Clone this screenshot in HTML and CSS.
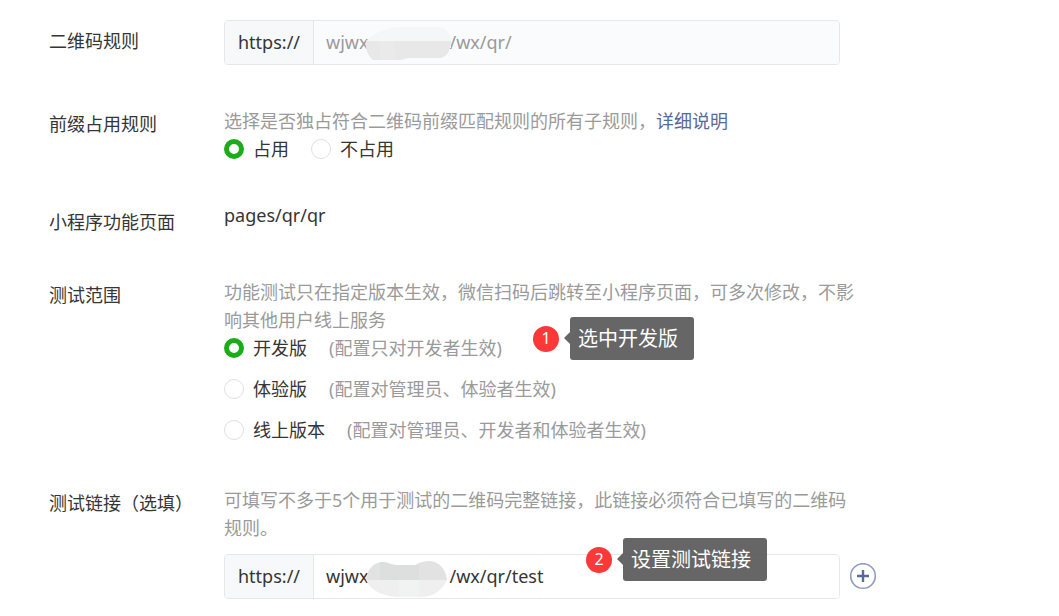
FILE: index.html
```
<!DOCTYPE html>
<html lang="zh-CN">
<head>
    <meta charset="UTF-8">
    <meta name="viewport" content="width=device-width, initial-scale=1.0">
    <title>二维码规则</title>
    <link rel="stylesheet" href="styles.css">
</head>
<body>
    <form class="form">
        <div class="row">
            <label class="row-label row-label-box" for="rule">二维码规则</label>
            <div class="row-content">
                <div class="input-line">
                    <div class="input-group disabled">
                        <span class="prefix">https://</span>
                        <input type="text" id="rule" value="wjwx&emsp;&emsp;&emsp;&emsp;&ensp;/wx/qr/" readonly>
                        <svg class="mask mask-rule" width="86" height="36" viewBox="0 0 86 36" aria-hidden="true">
                            <path fill="#f5f6f7" d="M1 15C8 7 20 3 32 1H72C80 1 86 7 86 15V22H1Z"/>
                            <path fill="#e8e8e9" d="M1 15H86C86 24 82 32 74 32H43L36 34H8C3 30 0 23 1 15Z"/>
                            <path fill="#eaeaeb" d="M15 15H30V34H15Z"/>
                        </svg>
                    </div>
                </div>
            </div>
        </div>

        <div class="row">
            <span class="row-label" id="prefixLabel">前缀占用规则</span>
            <div class="row-content">
                <p class="hint">选择是否独占符合二维码前缀匹配规则的所有子规则，<a href="#">详细说明</a></p>
                <div class="radio-inline" role="radiogroup" aria-labelledby="prefixLabel">
                    <label class="radio"><input type="radio" name="prefix" checked>占用</label>
                    <label class="radio"><input type="radio" name="prefix">不占用</label>
                </div>
            </div>
        </div>

        <div class="row">
            <span class="row-label">小程序功能页面</span>
            <div class="row-content">
                <p class="page-path">pages/qr/qr</p>
            </div>
        </div>

        <div class="row">
            <span class="row-label" id="rangeLabel">测试范围</span>
            <div class="row-content">
                <p class="hint">功能测试只在指定版本生效，微信扫码后跳转至小程序页面，可多次修改，不影响其他用户线上服务</p>
                <div class="radio-list" role="radiogroup" aria-labelledby="rangeLabel">
                    <label class="radio"><input type="radio" name="range" checked>开发版<span class="note">(配置只对开发者生效)</span></label>
                    <label class="radio"><input type="radio" name="range">体验版<span class="note">(配置对管理员、体验者生效)</span></label>
                    <label class="radio"><input type="radio" name="range">线上版本<span class="note">(配置对管理员、开发者和体验者生效)</span></label>
                    <div class="callout callout-range">
                        <span class="badge">1</span>
                        <span class="bubble">选中开发版</span>
                    </div>
                </div>
            </div>
        </div>

        <div class="row">
            <label class="row-label" for="link">测试链接（选填）</label>
            <div class="row-content">
                <p class="hint">可填写不多于5个用于测试的二维码完整链接，此链接必须符合已填写的二维码规则。</p>
                <div class="input-line input-line-link">
                    <div class="input-group">
                        <span class="prefix">https://</span>
                        <input type="text" id="link" value="wjwx&emsp;&emsp;&emsp;&emsp;&ensp;/wx/qr/test">
                        <svg class="mask mask-link" width="82" height="38" viewBox="0 0 82 38" aria-hidden="true">
                            <path fill="#e2e2e2" d="M1 20C2 9 9 2 18 2C23 2 26 5 31 5H50C55 2 60 1 65 1C75 2 81 10 82 20Z"/>
                            <path fill="#dddfdf" d="M15 2H18C23 2 26 5 31 5H54V20H15Z"/>
                            <path fill="#efefef" d="M1 20H82C78 30 68 37 56 37H32C17 36 5 30 1 20Z"/>
                            <path fill="#f1f3f3" d="M34 20H54V37H34Z"/>
                        </svg>
                    </div>
                    <button type="button" class="add" aria-label="添加链接">
                        <svg width="28" height="28" viewBox="0 0 28 28">
                            <circle cx="14" cy="13" r="12.3" fill="none" stroke="#8e9cbf" stroke-width="1.6"/>
                            <path d="M14 7V19M8 13H20" stroke="#576b95" stroke-width="2.4"/>
                        </svg>
                    </button>
                    <div class="callout callout-link">
                        <span class="badge">2</span>
                        <span class="bubble">设置测试链接</span>
                    </div>
                </div>
            </div>
        </div>
    </form>
</body>
</html>
```
FILE: styles.css
```
* {
    box-sizing: border-box;
}
body {
    margin: 0;
    padding: 20px 49px 16px;
    font-family: "Noto Sans", "Noto Sans CJK SC", sans-serif;
    font-size: 18px;
    line-height: 28px;
    color: #353535;
    background-color: #fff;
}
p {
    margin: 0;
}
.form {
    display: flex;
    flex-direction: column;
    gap: 42px;
}
.row {
    display: grid;
    grid-template-columns: 175px 1fr;
}
.row-label {
    padding-top: 3px;
    white-space: nowrap;
}
.row-label-box {
    padding-top: 7px;
}
.hint {
    max-width: 632px;
    color: #9a9a9a;
}
.hint a {
    color: #576b95;
    text-decoration: none;
}
.page-path {
    line-height: 20px;
}

/* inputs */
.input-line {
    position: relative;
    display: flex;
    align-items: center;
    gap: 9px;
}
.input-line-link {
    margin-top: 12px;
}
.input-group {
    position: relative;
    display: flex;
    flex: 1;
    max-width: 616px;
    height: 45px;
    border: 1px solid #e4e8eb;
    border-radius: 4px;
    overflow: hidden;
}
.prefix {
    width: 89px;
    padding: 0 13px;
    line-height: 43px;
    background-color: #f6f8f9;
    border-right: 1px solid #e4e8eb;
}
.input-group input {
    flex: 1;
    min-width: 0;
    padding: 0 12px 2px;
    border: 0;
    outline: none;
    font: inherit;
    color: #353535;
    background-color: #fff;
}
.input-group.disabled input {
    color: #9a9a9a;
    background-color: #fafbfc;
}
.mask {
    position: absolute;
    left: 140px;
    top: 5px;
}
.add {
    width: 28px;
    height: 28px;
    padding: 0;
    border: 0;
    background: none;
    cursor: pointer;
}
.add svg {
    display: block;
}

/* radios */
.radio-inline {
    display: flex;
    gap: 22px;
}
.radio-list {
    position: relative;
    display: flex;
    flex-direction: column;
    align-items: flex-start;
    gap: 13px;
}
.radio {
    display: flex;
    align-items: center;
    cursor: pointer;
}
.radio input {
    appearance: none;
    width: 20px;
    height: 20px;
    margin: 0 9px 0 0;
    border: 1px solid #dfdfdf;
    border-radius: 50%;
    background-color: #fff;
}
.radio input:checked {
    border: 5px solid #1aad19;
}
.note {
    margin-left: 22px;
    color: #9a9a9a;
}

/* step callouts */
.callout {
    position: absolute;
    display: flex;
    align-items: center;
    gap: 11px;
}
.callout-range {
    left: 309px;
    top: -17px;
}
.callout-link {
    left: 362px;
    top: -16px;
}
.badge {
    width: 26px;
    height: 26px;
    border-radius: 50%;
    font-size: 16px;
    line-height: 25px;
    text-align: center;
    color: #fff;
    background-color: #fc3838;
}
.bubble {
    position: relative;
    padding: 0 16px 0 8px;
    border-radius: 3px;
    font-size: 20px;
    line-height: 43px;
    white-space: nowrap;
    color: #fff;
    background-color: rgba(85, 85, 85, 0.9);
}
.bubble::before {
    content: "";
    position: absolute;
    left: -6px;
    top: 15px;
    border: 6px solid transparent;
    border-left: 0;
    border-right-color: rgba(85, 85, 85, 0.9);
}
```
